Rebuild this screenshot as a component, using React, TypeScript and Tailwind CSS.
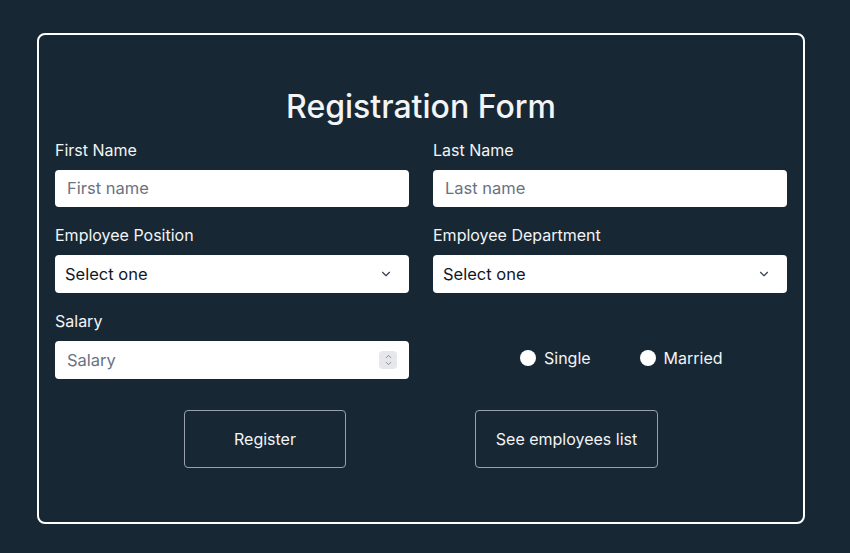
import { ChevronDown, ChevronUp } from 'lucide-react';

const font = { fontFamily: 'Inter, "Noto Sans", sans-serif' };

function Label({ children }: { children: string }) {
    return <label className="block text-[16px] leading-5 text-gray-100 mb-[10px]">{children}</label>;
}

function TextInput({ placeholder }: { placeholder: string }) {
    return (
        <div className="h-[37px] rounded bg-white flex items-center px-3 text-[16.5px] text-gray-500">
            {placeholder}
        </div>
    );
}

function Select() {
    return (
        <div className="h-[38px] rounded bg-white flex items-center justify-between pl-[10px] pr-[16px] text-[16.5px] text-gray-900">
            <span>Select one</span>
            <ChevronDown size={14} strokeWidth={2} className="text-gray-700" />
        </div>
    );
}

export default function App() {
    return (
        <div className="min-h-[553px] w-full bg-[#172733] pt-[33px] pl-[37px]" style={font}>
            <div className="w-[768px] h-[491px] border-2 border-white rounded-lg px-4 pt-[54px]">
                <h1 className="text-center text-[32px] leading-9 font-medium text-gray-100 mb-[15px]">Registration Form</h1>

                <div className="grid grid-cols-2 gap-x-6 gap-y-[18px]">
                    <div>
                        <Label>First Name</Label>
                        <TextInput placeholder="First name" />
                    </div>
                    <div>
                        <Label>Last Name</Label>
                        <TextInput placeholder="Last name" />
                    </div>
                    <div>
                        <Label>Employee Position</Label>
                        <Select />
                    </div>
                    <div>
                        <Label>Employee Department</Label>
                        <Select />
                    </div>
                    <div>
                        <Label>Salary</Label>
                        <div className="h-[38px] rounded bg-white flex items-center justify-between pl-3 pr-[12px] text-[16.5px] text-gray-500">
                            <span>Salary</span>
                            <div className="w-[18px] h-[18px] rounded-sm bg-gray-200 flex flex-col items-center justify-center text-gray-500">
                                <ChevronUp size={9} strokeWidth={2} className="-mb-[1px]" />
                                <ChevronDown size={9} strokeWidth={2} className="-mt-[1px]" />
                            </div>
                        </div>
                    </div>
                    <div className="flex items-end h-full">
                        <div className="flex items-center h-[38px] mb-[2px] ml-[87px] text-[16px] text-gray-100">
                            <span className="w-4 h-4 rounded-full bg-white mr-2" />
                            <span>Single</span>
                            <span className="w-4 h-4 rounded-full bg-white mr-2 ml-[49px]" />
                            <span>Married</span>
                        </div>
                    </div>
                </div>

                <div className="flex justify-evenly mt-[31px]">
                    <button className="w-[162px] h-[58px] border border-gray-400 rounded text-[16px] text-gray-100">Register</button>
                    <button className="w-[183px] h-[58px] border border-gray-400 rounded text-[16px] text-gray-100">See employees list</button>
                </div>
            </div>
        </div>
    );
}
